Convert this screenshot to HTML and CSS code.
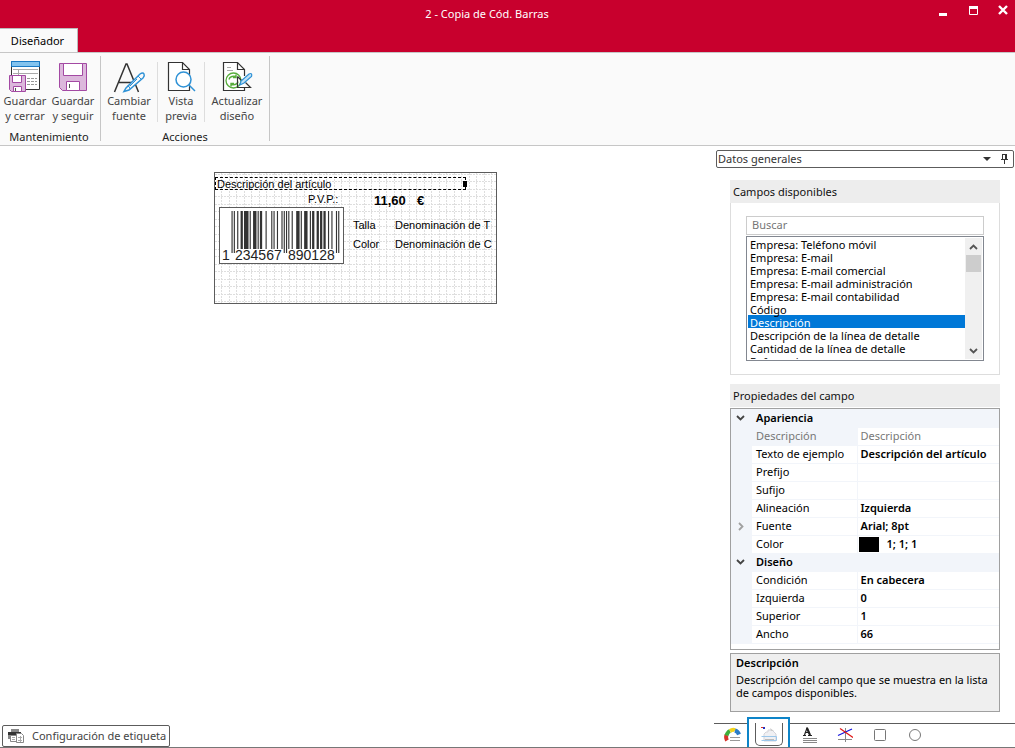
FILE: index.html
```
<!DOCTYPE html>
<html lang="es">
<head>
<meta charset="utf-8">
<title>2 - Copia de Cód. Barras</title>
<link rel="stylesheet" href="styles.css">
</head>
<body>
<header class="titlebar">
  <nav class="tabs"><button class="tab" type="button">Diseñador</button></nav>
  <h1 class="title">2 - Copia de Cód. Barras</h1>
  <div class="window-buttons">
    <button type="button" aria-label="Minimizar"><svg width="12" height="12"><path d="M2 9h8v3H2z" fill="#fff"/></svg></button>
    <button type="button" aria-label="Maximizar"><svg width="12" height="12"><path d="M2.500 2.500h8v8h-8z" fill="none" stroke="#fff"/><path d="M2 2h9v3H2z" fill="#fff"/></svg></button>
    <button type="button" aria-label="Cerrar"><svg width="12" height="12"><path d="M2 2l8 8M10 2l-8 8" stroke="#fff" stroke-width="2.4"/></svg></button>
  </div>
</header>

<section class="ribbon" aria-label="Diseñador">
  <div class="group group-save">
    <div class="tools">
      <button class="tool" type="button">
        <svg width="34" height="34" viewBox="0 0 34 34"><path d="M3.500 2.500h28v28h-28z" fill="#fff" stroke="#333"/><path d="M3.500 2.500h28v5h-28z" fill="#83c3ee" stroke="#1979c4"/><path d="M5 10.500h25M5 14.500h25M10.500 10v6" stroke="#aaa"/><path d="M19 19.500h10M19 22.500h10M19 25.500h10" stroke="#999" stroke-dasharray="3 1"/><path d="M1.500 16.500h16v16h-14l-2-2z" fill="#dcb8dc" stroke="#a349a3"/><path d="M4.500 16.500h9v7h-9zM5.500 27.500h8v5h-8z" fill="#fff" stroke="#a349a3"/><path d="M7.500 29v3" stroke="#555"/></svg>
        <span>Guardar<br>y cerrar</span>
      </button>
      <button class="tool" type="button">
        <svg width="34" height="34" viewBox="0 0 34 34"><path d="M3.500 4.500h27v27H6.500l-3-3z" fill="#dcb8dc" stroke="#a349a3"/><path d="M7.500 4.500h19v12h-19zM10.500 22.500h13v9h-13z" fill="#fff" stroke="#a349a3"/><path d="M13.500 25v4" stroke="#555"/></svg>
        <span>Guardar<br>y seguir</span>
      </button>
    </div>
    <h2 class="group-name">Mantenimiento</h2>
  </div>
  <div class="group">
    <div class="tools">
      <button class="tool tool-font" type="button">
        <svg width="34" height="34" viewBox="0 0 34 34"><path d="M2.500 33L14 5h1l11.500 28M7 23.500h15" fill="none" stroke="#333" stroke-width="1.500"/><path d="M14 29l14-14q3-2 4 0t-1 4L17 31l-5 1.500z" fill="#fafafa" stroke="#2f92d6" stroke-width="1.500"/><path d="M15 27q3 0 3 3M26 17l3 3M25 20l-7 7" fill="none" stroke="#2f92d6"/></svg>
        <span>Cambiar<br>fuente</span>
      </button>
      <i class="rule"></i>
      <button class="tool tool-preview" type="button">
        <svg width="34" height="34" viewBox="0 0 34 34"><path d="M4.500 3.500h14l7 7v21h-21z" fill="#fff" stroke="#333" stroke-width="1.200"/><path d="M18.500 3.500v7h7" fill="none" stroke="#333" stroke-width="1.200"/><circle cx="19.500" cy="20.500" r="7.500" fill="#fff" stroke="#2f92d6" stroke-width="1.500"/><path d="M25 26l6 6" stroke="#2f92d6" stroke-width="1.500"/></svg>
        <span>Vista<br>previa</span>
      </button>
      <i class="rule"></i>
      <button class="tool tool-update" type="button">
        <svg width="34" height="34" viewBox="0 0 34 34"><path d="M24.500 17v-6.500l-7-7h-14v28h21V29" fill="#fff" stroke="#333" stroke-width="1.200"/><path d="M17.500 3.500v7h7" fill="none" stroke="#333" stroke-width="1.200"/><path d="M7 8.500h4M7 11.500h6" stroke="#aaa"/><circle cx="13.500" cy="21.500" r="7.500" fill="#fff" stroke="#58ae3c" stroke-width="1.300"/><path d="M9 20.500q1-4 7-3m0-2v3h-3M18 22.500q-1 4-7 3m0 2v-3h3" fill="none" stroke="#58ae3c" stroke-width="1.400"/><path d="M17.500 17.500v11h13l-5-5M17.500 17.500l4 4" fill="none" stroke="#333" stroke-width="1.200"/><path d="M20 26l1-4 8-7q2-1 2.500 0t0 2.500L24 24z" fill="#bfe0f6" stroke="#2f92d6" stroke-width="1.200"/></svg>
        <span>Actualizar<br>diseño</span>
      </button>
    </div>
    <h2 class="group-name">Acciones</h2>
  </div>
</section>

<div class="workspace">
  <main class="canvas">
    <div class="label-sheet">
      <svg class="dots" width="100%" height="100%"><defs><pattern id="dots" width="15" height="15" patternUnits="userSpaceOnUse"><path d="M6.500 0v16M14.500 0v16M0 1.500h16M0 8.500h16" stroke="#dedede" stroke-dasharray="2 1"/></pattern></defs><rect width="100%" height="100%" fill="url(#dots)"/></svg>
      <span class="field field-desc">Descripción del artículo<i class="handle"></i></span>
      <span class="field field-pvp">P.V.P.:</span>
      <span class="field field-price">11,60</span>
      <span class="field field-euro">€</span>
      <span class="field field-size">Talla</span>
      <span class="field field-size-name">Denominación de T</span>
      <span class="field field-color">Color</span>
      <span class="field field-color-name">Denominación de C</span>
      <svg class="barcode" width="125" height="57" viewBox="0 0 125 57">
        <rect x=".5" y=".5" width="124" height="56" fill="#fff" stroke="#5c5c5c"/>
        <g transform="translate(12.500 4) scale(1.135 1)" fill="#333"><path d="M0 0h1v42h-1zM2 0h1v42h-1zM46 0h1v42h-1zM48 0h1v42h-1zM92 0h1v42h-1zM94 0h1v42h-1z"/><path d="M5 0h1v38h-1zM8 0h2v38h-2zM11 0h4v38h-4zM16 0h1v38h-1zM19 0h3v38h-3zM23 0h1v38h-1zM25 0h2v38h-2zM30 0h1v38h-1zM35 0h1v38h-1zM37 0h1v38h-1zM40 0h1v38h-1zM44 0h1v38h-1zM50 0h1v38h-1zM53 0h1v38h-1zM57 0h3v38h-3zM61 0h1v38h-1zM64 0h3v38h-3zM69 0h1v38h-1zM71 0h2v38h-2zM75 0h2v38h-2zM78 0h2v38h-2zM81 0h2v38h-2zM85 0h1v38h-1zM88 0h1v38h-1z"/></g>
        <g class="barcode-digits"><text x="3" y="53">1</text><text x="16" y="53">234567</text><text x="69" y="53">890128</text></g>
      </svg>
    </div>
    <button class="config" type="button">
      <svg width="17" height="16" viewBox="0 0 17 16"><path d="M3 1h8v3H3z" fill="#888"/><path d="M0 4h13v3H0z" fill="#333"/><path d="M0 7h3v4H0z" fill="#888"/><path d="M2.500 7.500h6v6h-6zM8.500 5.500h5l2 2v7h-7z" fill="#fff" stroke="#888"/><path d="M4 9.500h3M4 11.500h3M10 9.500h4M10 12.500h4M12.500 8v6" stroke="#aaa"/></svg>
      <span>Configuración de etiqueta</span>
    </button>
  </main>

  <aside class="panel">
    <div class="panel-title">
      <h2>Datos generales</h2>
      <button type="button" aria-label="Menú"><svg width="9" height="5"><path d="M1 0h8L5 4z" fill="#333"/></svg></button>
      <button type="button" aria-label="Anclar"><svg width="9" height="10"><path d="M2.500 0v5M2 .5h5M6.500 0v5M5.500 0v5M1 5.500h7M4.500 5v5" fill="none" stroke="#333"/></svg></button>
    </div>
    <div class="panel-body">
      <section class="box">
        <h3 class="box-title">Campos disponibles</h3>
        <div class="box-body">
          <input class="search" type="text" placeholder="Buscar" aria-label="Buscar">
          <div class="listbox">
            <select class="list" size="9" aria-label="Campos disponibles">
              <option>Empresa: Teléfono móvil</option>
              <option>Empresa: E-mail</option>
              <option>Empresa: E-mail comercial</option>
              <option>Empresa: E-mail administración</option>
              <option>Empresa: E-mail contabilidad</option>
              <option>Código</option>
              <option selected>Descripción</option>
              <option>Descripción de la línea de detalle</option>
              <option>Cantidad de la línea de detalle</option>
              <option>Referencia</option>
            </select>
            <div class="scroll">
              <button type="button" aria-label="Subir"><svg width="9" height="6"><path d="M1 5l3.500-3.500L8 5" fill="none" stroke="#555" stroke-width="1.800"/></svg></button>
              <i class="thumb"></i>
              <button type="button" aria-label="Bajar"><svg width="9" height="6"><path d="M1 1l3.500 3.500L8 1" fill="none" stroke="#555" stroke-width="1.800"/></svg></button>
            </div>
          </div>
        </div>
      </section>

      <section class="props">
        <h3 class="box-title">Propiedades del campo</h3>
        <div class="grid-frame">
          <table class="grid">
            <colgroup><col class="col-gutter"><col class="col-name"><col></colgroup>
            <tbody>
              <tr class="cat"><td><svg width="9" height="6"><path d="M1 1l3.500 3.500L8 1" fill="none" stroke="#444" stroke-width="1.800"/></svg></td><th colspan="2">Apariencia</th></tr>
              <tr class="off"><td></td><th>Descripción</th><td>Descripción</td></tr>
              <tr><td></td><th>Texto de ejemplo</th><td>Descripción del artículo</td></tr>
              <tr><td></td><th>Prefijo</th><td></td></tr>
              <tr><td></td><th>Sufijo</th><td></td></tr>
              <tr><td></td><th>Alineación</th><td>Izquierda</td></tr>
              <tr><td><svg width="9" height="9"><path d="M3 1l3.500 3.500L3 8" fill="none" stroke="#a0a0a0" stroke-width="1.800"/></svg></td><th>Fuente</th><td>Arial; 8pt</td></tr>
              <tr><td></td><th>Color</th><td class="swatch-cell"><i class="swatch"></i>1; 1; 1</td></tr>
            </tbody>
            <tbody>
              <tr class="cat"><td><svg width="9" height="6"><path d="M1 1l3.500 3.500L8 1" fill="none" stroke="#444" stroke-width="1.800"/></svg></td><th colspan="2">Diseño</th></tr>
              <tr><td></td><th>Condición</th><td>En cabecera</td></tr>
              <tr><td></td><th>Izquierda</th><td>0</td></tr>
              <tr><td></td><th>Superior</th><td>1</td></tr>
              <tr><td></td><th>Ancho</th><td>66</td></tr>
            </tbody>
          </table>
        </div>
        <div class="help"><h4>Descripción</h4><p>Descripción del campo que se muestra en la lista de campos disponibles.</p></div>
      </section>
    </div>
    <nav class="views">
      <button type="button" aria-label="Datos generales"><svg width="17" height="16" viewBox="0 0 17 16"><path d="M3 13.500Q1.500 11 2.500 8" fill="none" stroke="#d8322a" stroke-width="4"/><path d="M2.500 8.500Q3.500 5 6 4" fill="none" stroke="#3fae3a" stroke-width="4"/><path d="M6 4q3-2 5-.5" fill="none" stroke="#f1d21c" stroke-width="4"/><path d="M11 3.500q3 1 4 4" fill="none" stroke="#2b7cc7" stroke-width="4"/><path d="M6 10.500h10M6 13.500h10" stroke="#999"/></svg></button>
      <button type="button" class="current" aria-label="Campos"><span class="notch"><svg width="18" height="18" viewBox="0 0 18 18"><path d="M6 7h2V5h4l4 4v7H4V9z" fill="#f0f0f3" stroke="#d3d3da"/><path d="M1 2.500h4" stroke="#d8322a"/><path d="M3 2h2v2H3z" fill="#2430c0"/><path d="M10 3l4 3h-3z" fill="#ccc"/><path d="M1.500 11.500h15v4h-15" fill="none" stroke="#9cc7ea"/><path d="M5 14.500h9" stroke="#bbb"/></svg></span></button>
      <button type="button" aria-label="Texto"><svg width="16" height="16" viewBox="0 0 16 16"><path d="M1 8.500h3M6 8.500h4M2.500 8L5 1l3 7M3.500 5.500h3.500" fill="none" stroke="#222" stroke-width="1.200"/><path d="M5 1l3 7" stroke="#222" stroke-width="2"/><path d="M1 11.500h14M1 13.500h14M1 15.500h14" stroke="#888"/></svg></button>
      <button type="button" aria-label="Línea"><svg width="16" height="16" viewBox="0 0 16 16"><path d="M8.500 1v14M1 12.500h14" stroke="#888"/><path d="M1 8.500l14-6.500" stroke="#1414e0" stroke-width="1.200"/><path d="M3 1.500l13 9" stroke="#e01414" stroke-width="1.200"/></svg></button>
      <button type="button" aria-label="Rectángulo"><svg width="16" height="16" viewBox="0 0 16 16"><rect x="2.500" y="2.500" width="11" height="11" rx="1" fill="none" stroke="#777"/></svg></button>
      <button type="button" aria-label="Elipse"><svg width="16" height="16" viewBox="0 0 16 16"><circle cx="8" cy="8" r="5.500" fill="none" stroke="#777"/></svg></button>
    </nav>
  </aside>
</div>
</body>
</html>
```
FILE: styles.css
```
* { box-sizing: border-box; }
body {
  margin: 0;
  min-height: 100vh;
  display: flex;
  flex-direction: column;
  background: #fff;
  color: #000;
  font: 11px/15px "Noto Sans", "Open Sans", sans-serif;
  border-bottom: 1px solid #777;
}
button, input, select { font: inherit; color: inherit; }
button { border: 0; padding: 0; background: none; }
h1, h2, h3, h4, p { margin: 0; font-size: inherit; font-weight: 400; }
svg { display: block; }

.titlebar {
  display: grid;
  grid-template-columns: 1fr auto 1fr;
  height: 52px;
  background: #c8002d;
  color: #fff;
}
.tabs { display: flex; align-items: flex-end; margin-left: -1px; }
.tab {
  height: 24px;
  width: 79px;
  padding-right: 2px;
  background: #fafafa;
  color: #000;
  border: solid #bbb;
  border-width: 1px 1px 0;
}
.title { padding-top: 6px; margin-right: 41px; line-height: 16px; }
.window-buttons { display: flex; justify-content: flex-end; gap: 18px; padding: 4px 6px; align-items: flex-start; }

.ribbon {
  display: flex;
  height: 94px;
  padding-top: 3px;
  background: #fafafa;
  border-top: 1px solid #c6c6c6;
  border-bottom: 1px solid #c6c6c6;
  color: #444;
}
.group { display: flex; flex-direction: column; align-items: center; border-right: 1px solid #c6c6c6; margin-bottom: 4px; }
.group-save { padding: 0 3px 0 1px; }
.tools { display: flex; }
.tool { width: 48px; display: flex; flex-direction: column; align-items: center; height: 70px; padding-top: 3px; }
.tool-font { width: 56px; }
.tool-preview { width: 46px; }
.tool-update { width: 64px; }
.rule { width: 1px; height: 60px; margin-top: 6px; background: #ddd; }
.group-name { color: #222; margin-top: 3px; }

.workspace { flex: 1; display: flex; }
.canvas { flex: 1; display: flex; flex-direction: column; justify-content: space-between; align-items: flex-start; }
.label-sheet {
  position: relative;
  width: 283px;
  height: 132px;
  margin: 26px 0 0 214px;
  overflow: hidden;
  border: 1px solid #5c5c5c;
  font: 11px/13px "Liberation Sans", Arial, sans-serif;
}
.dots { position: absolute; inset: 0; }
.field { position: absolute; white-space: nowrap; }
.field-desc { left: 0; top: 4px; width: 251px; height: 13px; padding-left: 1px; border: 1px dashed #000; }
.handle { position: absolute; right: -2px; top: 3px; width: 4px; height: 6px; background: #000; }
.field-pvp { left: 93px; top: 20px; }
.field-price, .field-euro { top: 21px; font-size: 13px; font-weight: 700; }
.field-price { left: 159px; }
.field-euro { left: 202px; }
.field-size { left: 138px; top: 46px; }
.field-size-name { left: 180px; top: 46px; }
.field-color { left: 138px; top: 65px; }
.field-color-name { left: 180px; top: 65px; }
.barcode { position: absolute; left: 4px; top: 34px; }
.barcode-digits { font-size: 14px; fill: #222; }

.config {
  display: flex;
  align-items: center;
  gap: 7px;
  height: 22px;
  margin-left: 2px;
  padding: 0 3px 0 5px;
  border: 1px solid #5c5c5c;
  border-radius: 2px;
  color: #444;
}
.config span { padding-bottom: 2px; }

.panel { width: 301px; display: flex; flex-direction: column; padding-top: 4px; }
.panel-title {
  display: flex;
  align-items: center;
  gap: 9px;
  height: 18px;
  margin: 0 1px 0 2px;
  padding: 0 4px 0 1px;
  border: 1px solid #5c5c5c;
  border-radius: 2px;
  color: #333;
}
.panel-title h2 { flex: 1; padding-bottom: 2px; }
.panel-body { flex: 1; padding: 12px 15px 0 16px; display: flex; flex-direction: column; gap: 9px; }
.box-title { height: 23px; padding-left: 3px; background: #ededed; line-height: 23px; font-size: 11px; color: #111; }
.box-body { border: 1px solid #ddd; border-top: 0; padding: 13px 15px; }
.search { display: block; width: 100%; height: 19px; padding: 0 5px 2px; border: 1px solid #ccc; outline: 0; }
.search::placeholder { color: #767676; }
.listbox { display: flex; height: 125px; margin-top: 1px; border: 1px solid #828790; padding: 1px; }
.list { flex: 1; min-width: 0; height: 122px; margin-top: -1px; border: 0; border-radius: 0; padding: 0; outline: 0; overflow: hidden; background: #fff; }
.list option { height: 13px; min-height: 13px; padding: 0 2px; }
.list option:checked { background: #0078d7 linear-gradient(#0078d7, #0078d7); color: #fff; -webkit-text-fill-color: #fff; }
.scroll { width: 17px; display: flex; flex-direction: column; background: #f0f0f0; }
.scroll button { height: 17px; display: grid; place-items: center; }
.thumb { height: 17px; margin: 0 1px; background: #cdcdcd; }
.scroll button:last-child { margin-top: auto; }

.grid-frame { margin-top: 1px; height: 242px; border: 1px solid #a0a0a0; }
.grid { width: 100%; table-layout: fixed; border-collapse: collapse; }
.col-gutter { width: 21px; }
.col-name { width: 105px; }
.grid tr { height: 18px; }
.grid td, .grid th { height: 18px; padding: 0 0 0 4px; line-height: 16px; text-align: left; font-weight: 400; white-space: nowrap; border-bottom: 1px solid #f2f5fa; }
.grid td:last-child { font-weight: 600; border-left: 1px solid #f2f5fa; padding-left: 3px; }
.grid td:first-child { background: #f2f5fa; padding-left: 5px; }
.grid .cat th { background: #f2f5fa; font-weight: 600; }
.grid .off th, .grid .off td:last-child { color: #777; font-weight: 400; }
.grid .off th { background: #f2f5fa; }
.grid td.swatch-cell { padding-left: 1px; }
.swatch { display: inline-block; width: 20px; height: 15px; margin-right: 8px; background: #000; vertical-align: middle; }
.help { height: 59px; margin-top: 3px; padding: 1px 5px; border: 1px solid #a0a0a0; background: #efefef; line-height: 13px; }
.help h4 { font-weight: 600; line-height: 16px; margin-bottom: 2px; }

.views { display: flex; align-items: flex-start; height: 24px; margin-top: 11px; padding-left: 1px; border-top: 1px solid #5c5c5c; }
.views button { width: 35px; height: 22px; display: grid; place-items: center; }
.views .current { width: 43px; height: 31px; margin: -7px 2px 0 -3px; border: 2px solid #0d84c8; border-bottom: 0; background: #fff; }
.notch { width: 28px; height: 23px; align-self: end; margin-bottom: 2px; display: grid; place-items: center; border: 1px solid #5c5c5c; border-top: 0; border-radius: 0 0 5px 5px; }
```
